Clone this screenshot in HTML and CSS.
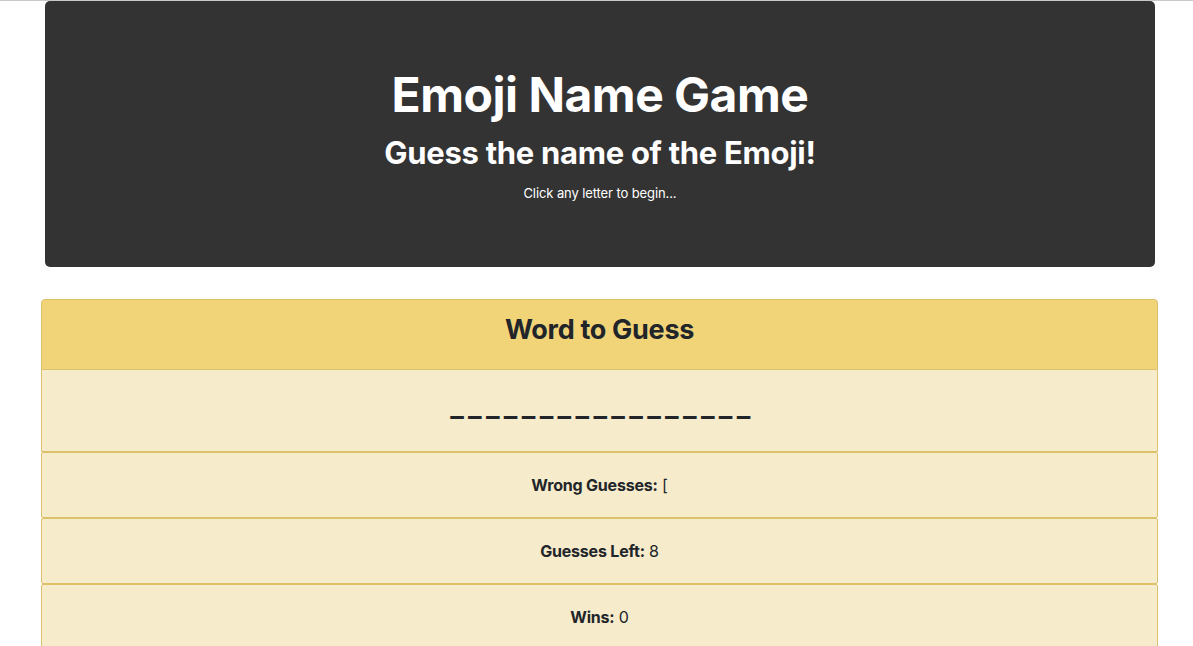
FILE: index.html
```html
<!DOCTYPE html>
<html>
<head>
<meta charset="utf-8">
<link rel="stylesheet" href="styles.css">
</head>
<body>
<div class="topline"></div>
<header class="jumbo">
  <h1 class="title">Emoji Name Game</h1>
  <h2 class="subtitle">Guess the name of the Emoji!</h2>
  <p class="hint">Click any letter to begin...</p>
</header>
<section class="card">
  <div class="card-header">Word to Guess</div>
  <div class="word">_ _ _ _ _ _ _ _ _ _ _ _ _ _ _ _ _</div>
  <div class="row"><b>Wrong Guesses:</b> [</div>
  <div class="row"><b>Guesses Left:</b> 8</div>
  <div class="row"><b>Wins:</b> 0</div>
</section>
</body>
</html>
```
FILE: styles.css
```css
* { box-sizing: border-box; }
html, body { margin: 0; padding: 0; background: #fff; }
body {
  font-family: Inter, "Noto Sans", sans-serif;
  color: #212529;
  overflow: hidden;
  height: 646px;
}
.topline { height: 1px; background: #c9c9c9; }
.jumbo {
  margin: 0 0 0 45px;
  width: 1110px;
  height: 266px;
  background: #333333;
  border-radius: 5px;
  color: #fff;
  text-align: center;
  padding-top: 65px;
}
.title {
  margin: 0 0 10px;
  font-size: 48px;
  line-height: 1.2;
  font-weight: 700;
  letter-spacing: -0.5px;
}
.subtitle {
  margin: 0 0 13px;
  font-size: 31px;
  line-height: 1.2;
  font-weight: 700;
  letter-spacing: -0.3px;
}
.hint {
  margin: 0;
  font-size: 13px;
  line-height: 19.5px;
  letter-spacing: -0.1px;
}
.card {
  margin: 32px 0 0 41px;
  width: 1117px;
}
.card-header {
  height: 71px;
  background: #f1d378;
  border: 1px solid #dcc06a;
  border-radius: 4px 4px 0 0;
  display: flex;
  align-items: center;
  justify-content: center;
  padding-bottom: 10px;
  font-size: 27px;
  font-weight: 700;
  letter-spacing: -0.3px;
}
.word {
  height: 82px;
  background: #f6ebcb;
  border: 1px solid #dcc06a;
  border-top: none;
  display: flex;
  align-items: flex-end;
  justify-content: center;
  padding-bottom: 31px;
  font-size: 29px;
  line-height: 1;
  font-weight: 600;
  letter-spacing: -1.5px;
}
.row {
  height: 66px;
  background: #f6ebcb;
  border: 1px solid #dcc06a;
  border-radius: 2px;
  display: flex;
  align-items: center;
  justify-content: center;
  font-size: 16px;
  letter-spacing: -0.2px;
  white-space: pre;
}
.row b { font-weight: 700; }
```
